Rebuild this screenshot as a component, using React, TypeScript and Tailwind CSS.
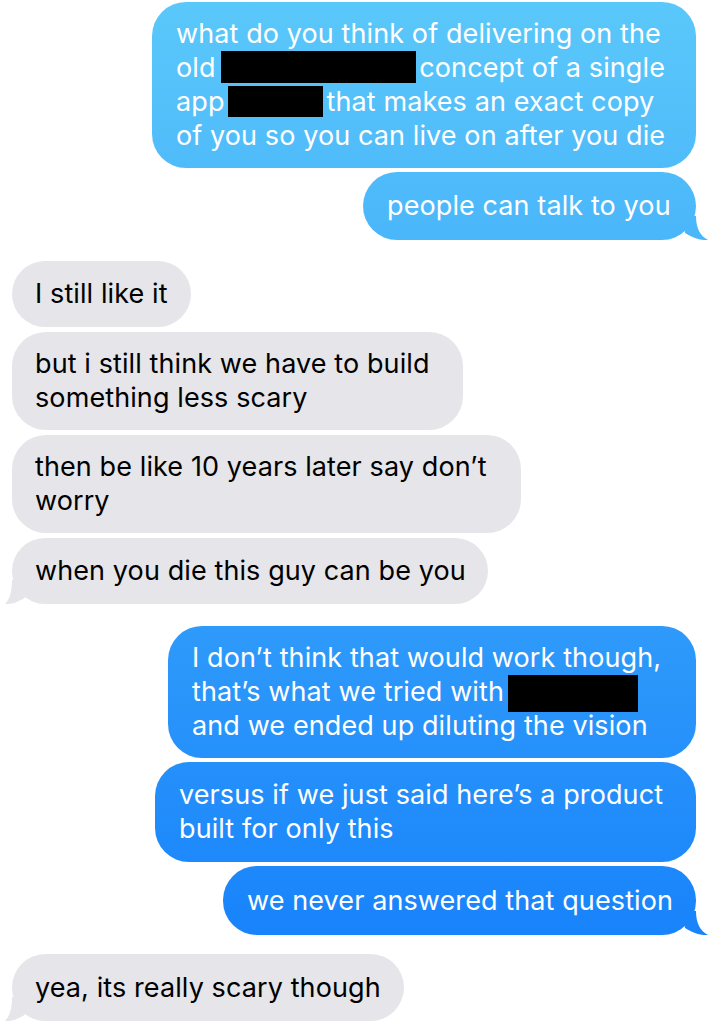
import type { ReactNode } from "react";

type Side = "me" | "them";

interface BubbleProps {
  side: Side;
  size: string;
  tail?: boolean;
  children: ReactNode;
}

const blueFill = "bg-fixed bg-[linear-gradient(180deg,#5bc8fa,#127dfb)]";

function Bubble({ side, size, tail, children }: BubbleProps) {
  const isMe = side === "me";
  return (
    <div
      className={
        isMe
          ? "relative self-end mr-[13px] " + size
          : "relative self-start ml-[12px] " + size
      }
    >
      {tail && isMe && (
        <div
          className={
            "absolute right-[-13px] bottom-0 h-[24px] w-[26px] [clip-path:path('M0_0H13C13_12_17_20_25_24C19_24.5_11_22.5_2_17Z')] " +
            blueFill
          }
        />
      )}
      {tail && !isMe && (
        <div className="absolute left-[-7px] bottom-0 h-[24px] w-[24px] bg-[#e5e5ea] [clip-path:path('M24_0H7C7_11_5_19_0_24C6_24.5_12_22.5_18_19L24_14Z')]" />
      )}
      <div
        className={
          isMe
            ? "relative flex h-full w-full items-center rounded-[34px] pl-[24px] text-white " +
              blueFill
            : "relative flex h-full w-full items-center rounded-[34px] bg-[#e5e5ea] pl-[23px] text-black"
        }
      >
        <p className="whitespace-nowrap">{children}</p>
      </div>
    </div>
  );
}

function Redacted({ className }: { className: string }) {
  return <span className={"inline-block bg-black " + className} />;
}

export default function App() {
  return (
    <div className="flex min-h-screen w-full flex-col bg-white pt-[2px] font-['Inter',sans-serif] text-[27px] leading-[34px] tracking-[0.1px]">
      <Bubble side="me" size="w-[544px] h-[166px]">
        what do you think of delivering on the
        <br />
        old <Redacted className="-ml-[2px] mr-[3px] h-[32px] w-[195px] align-[-6px]" />
        concept of a single
        <br />
        app
        <Redacted className="ml-[3px] mr-[4px] h-[31px] w-[95px] align-[-6px]" />
        that makes an exact copy
        <br />
        of you so you can live on after you die
      </Bubble>

      <div className="mt-[4px] flex flex-col">
        <Bubble side="me" size="w-[333px] h-[68px]" tail>
          people can talk to you
        </Bubble>
      </div>

      <div className="mt-[21px] flex flex-col gap-[5px]">
        <Bubble side="them" size="w-[179px] h-[66px]">
          I still like it
        </Bubble>
        <Bubble side="them" size="w-[451px] h-[98px]">
          but i still think we have to build
          <br />
          something less scary
        </Bubble>
        <Bubble side="them" size="w-[509px] h-[98px]">
          then be like 10 years later say don’t
          <br />
          worry
        </Bubble>
        <Bubble side="them" size="w-[476px] h-[66px]" tail>
          when you die this guy can be you
        </Bubble>
      </div>

      <div className="mt-[22px] flex flex-col gap-[4px]">
        <Bubble side="me" size="w-[528px] h-[132px]">
          I don’t think that would work though,
          <br />
          that’s what we tried with
          <Redacted className="ml-[4px] -mt-[2px] -mb-[3px] h-[37px] w-[130px] align-[-8px]" />
          <br />
          and we ended up diluting the vision
        </Bubble>
        <Bubble side="me" size="w-[541px] h-[100px]">
          versus if we just said here’s a product
          <br />
          built for only this
        </Bubble>
        <Bubble side="me" size="w-[473px] h-[69px]" tail>
          we never answered that question
        </Bubble>
      </div>

      <div className="mt-[19px] flex flex-col">
        <Bubble side="them" size="w-[392px] h-[67px]" tail>
          yea, its really scary though
        </Bubble>
      </div>
    </div>
  );
}
